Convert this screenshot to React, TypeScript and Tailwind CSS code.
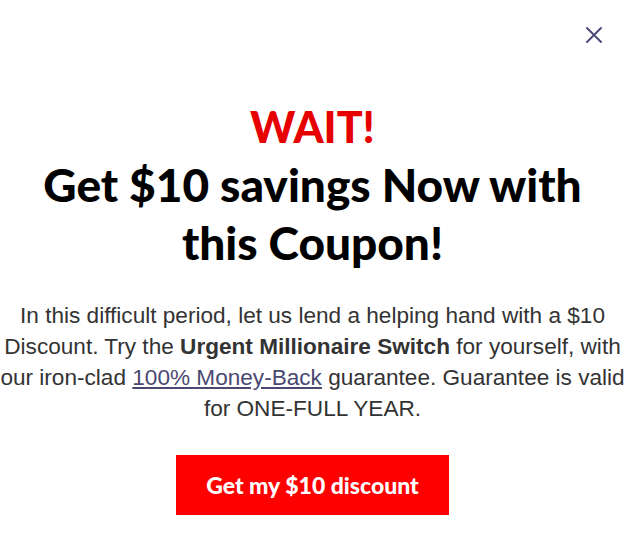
import React from "react";

export default function App() {
  return (
    <div className="relative w-[629px] h-[546px] bg-white overflow-hidden">
      <button className="absolute right-[26px] top-[26px] w-[18px] h-[18px] flex items-center justify-center">
        <svg width="18" height="18" viewBox="0 0 18 18" fill="none">
          <path d="M2 2L16 16M16 2L2 16" stroke="#4d4b7b" strokeWidth="2" strokeLinecap="round" />
        </svg>
      </button>
      <div className="w-[625px] flex flex-col items-center pt-[100px]">
        <h1 className="text-center font-['Lato',sans-serif] font-black text-[#e60000] text-[43px] leading-[54px]">
          WAIT!
        </h1>
        <h2 className="mt-[2px] text-center font-['Lato',sans-serif] font-black text-black text-[46px] leading-[58px] w-[600px]">
          Get $10 savings Now with this Coupon!
        </h2>
        <p className="mt-[28px] text-center font-['Liberation_Sans',Arial,sans-serif] text-[22.6px] leading-[31px] text-[#333333] w-full">
          In this difficult period, let us lend a helping hand with a $10 Discount. Try the{" "}
          <b>Urgent Millionaire Switch</b> for yourself, with our iron-clad{" "}
          <a href="#" className="underline text-[#4a4870]">100% Money-Back</a> guarantee. Guarantee is valid for ONE-FULL YEAR.
        </p>
        <button className="mt-[31px] w-[273px] h-[60px] bg-[#ff0000] text-white font-['Lato',sans-serif] font-black text-[23px]">
          Get my $10 discount
        </button>
      </div>
    </div>
  );
}
